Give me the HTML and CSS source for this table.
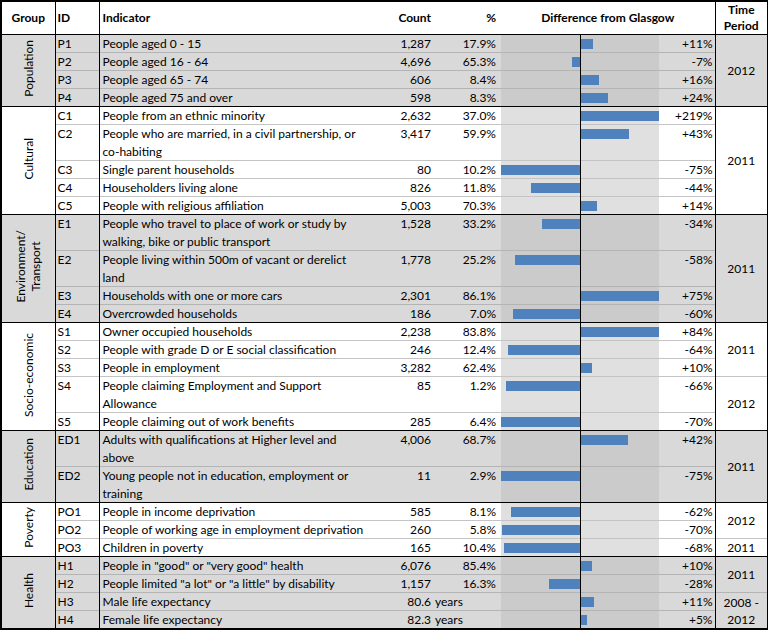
FILE: index.html
```html
<!DOCTYPE html>
<html>
<head>
<meta charset="utf-8">
<link rel="stylesheet" href="styles.css">
</head>
<body>
<table class="tbl">
<colgroup>
<col class="c-grp"><col class="c-id"><col class="c-ind"><col class="c-cnt"><col class="c-pct"><col class="c-neg"><col class="c-pos"><col class="c-dif"><col class="c-time">
</colgroup>
<thead>
<tr class="head">
<th class="grp">Group</th><th class="id">ID</th><th class="ind">Indicator</th><th class="num">Count</th><th class="num pct">%</th><th class="dfh" colspan="3">Difference from Glasgow</th><th class="time">Time<br>Period</th>
</tr>
</thead>
<tbody class="shade">
<tr class="first"><td class="grp" rowspan="4"><span class="vt">Population</span></td><td class="id">P1</td><td class="ind">People aged 0 - 15</td><td class="num">1,287</td><td class="num pct">17.9%</td><td class="neg"></td><td class="pos"><div class="bar" style="width:12px"></div></td><td class="dif">+11%</td><td class="time" rowspan="4">2012</td></tr>
<tr><td class="id">P2</td><td class="ind">People aged 16 - 64</td><td class="num">4,696</td><td class="num pct">65.3%</td><td class="neg"><div class="bar" style="width:8px"></div></td><td class="pos"></td><td class="dif">-7%</td></tr>
<tr><td class="id">P3</td><td class="ind">People aged 65 - 74</td><td class="num">606</td><td class="num pct">8.4%</td><td class="neg"></td><td class="pos"><div class="bar" style="width:18px"></div></td><td class="dif">+16%</td></tr>
<tr><td class="id">P4</td><td class="ind">People aged 75 and over</td><td class="num">598</td><td class="num pct">8.3%</td><td class="neg"></td><td class="pos"><div class="bar" style="width:27px"></div></td><td class="dif">+24%</td></tr>
</tbody>
<tbody class="plain">
<tr class="first"><td class="grp" rowspan="6"><span class="vt">Cultural</span></td><td class="id">C1</td><td class="ind">People from an ethnic minority</td><td class="num">2,632</td><td class="num pct">37.0%</td><td class="neg"></td><td class="pos"><div class="bar" style="width:79px"></div></td><td class="dif">+219%</td><td class="time" rowspan="6">2011</td></tr>
<tr class="two"><td class="id">C2</td><td class="ind">People who are married, in a civil partnership, or<br>co-habiting</td><td class="num">3,417</td><td class="num pct">59.9%</td><td class="neg"></td><td class="pos"><div class="bar" style="width:48px"></div></td><td class="dif">+43%</td></tr>
<tr><td class="id">C3</td><td class="ind">Single parent households</td><td class="num">80</td><td class="num pct">10.2%</td><td class="neg"><div class="bar" style="width:79px"></div></td><td class="pos"></td><td class="dif">-75%</td></tr>
<tr><td class="id">C4</td><td class="ind">Householders living alone</td><td class="num">826</td><td class="num pct">11.8%</td><td class="neg"><div class="bar" style="width:49px"></div></td><td class="pos"></td><td class="dif">-44%</td></tr>
<tr><td class="id">C5</td><td class="ind">People with religious affiliation</td><td class="num">5,003</td><td class="num pct">70.3%</td><td class="neg"></td><td class="pos"><div class="bar" style="width:16px"></div></td><td class="dif">+14%</td></tr>
</tbody>
<tbody class="shade">
<tr class="first two"><td class="grp" rowspan="6"><span class="vt">Environment/<br>Transport</span></td><td class="id">E1</td><td class="ind">People who travel to place of work or study by<br>walking, bike or public transport</td><td class="num">1,528</td><td class="num pct">33.2%</td><td class="neg"><div class="bar" style="width:38px"></div></td><td class="pos"></td><td class="dif">-34%</td><td class="time" rowspan="6">2011</td></tr>
<tr class="two"><td class="id">E2</td><td class="ind">People living within 500m of vacant or derelict<br>land</td><td class="num">1,778</td><td class="num pct">25.2%</td><td class="neg"><div class="bar" style="width:65px"></div></td><td class="pos"></td><td class="dif">-58%</td></tr>
<tr><td class="id">E3</td><td class="ind">Households with one or more cars</td><td class="num">2,301</td><td class="num pct">86.1%</td><td class="neg"></td><td class="pos"><div class="bar" style="width:79px"></div></td><td class="dif">+75%</td></tr>
<tr><td class="id">E4</td><td class="ind">Overcrowded households</td><td class="num">186</td><td class="num pct">7.0%</td><td class="neg"><div class="bar" style="width:67px"></div></td><td class="pos"></td><td class="dif">-60%</td></tr>
</tbody>
<tbody class="plain">
<tr class="first"><td class="grp" rowspan="6"><span class="vt">Socio-economic</span></td><td class="id">S1</td><td class="ind">Owner occupied households</td><td class="num">2,238</td><td class="num pct">83.8%</td><td class="neg"></td><td class="pos"><div class="bar" style="width:79px"></div></td><td class="dif">+84%</td><td class="time" rowspan="3">2011</td></tr>
<tr><td class="id">S2</td><td class="ind">People with grade D or E social classification</td><td class="num">246</td><td class="num pct">12.4%</td><td class="neg"><div class="bar" style="width:72px"></div></td><td class="pos"></td><td class="dif">-64%</td></tr>
<tr><td class="id">S3</td><td class="ind">People in employment</td><td class="num">3,282</td><td class="num pct">62.4%</td><td class="neg"></td><td class="pos"><div class="bar" style="width:11px"></div></td><td class="dif">+10%</td></tr>
<tr class="two"><td class="id">S4</td><td class="ind">People claiming Employment and Support<br>Allowance</td><td class="num">85</td><td class="num pct">1.2%</td><td class="neg"><div class="bar" style="width:74px"></div></td><td class="pos"></td><td class="dif">-66%</td><td class="time" rowspan="3">2012</td></tr>
<tr><td class="id">S5</td><td class="ind">People claiming out of work benefits</td><td class="num">285</td><td class="num pct">6.4%</td><td class="neg"><div class="bar" style="width:79px"></div></td><td class="pos"></td><td class="dif">-70%</td></tr>
</tbody>
<tbody class="shade">
<tr class="first two"><td class="grp" rowspan="4"><span class="vt">Education</span></td><td class="id">ED1</td><td class="ind">Adults with qualifications at Higher level and<br>above</td><td class="num">4,006</td><td class="num pct">68.7%</td><td class="neg"></td><td class="pos"><div class="bar" style="width:47px"></div></td><td class="dif">+42%</td><td class="time" rowspan="4">2011</td></tr>
<tr class="two"><td class="id">ED2</td><td class="ind">Young people not in education, employment or<br>training</td><td class="num">11</td><td class="num pct">2.9%</td><td class="neg"><div class="bar" style="width:79px"></div></td><td class="pos"></td><td class="dif">-75%</td></tr>
</tbody>
<tbody class="plain">
<tr class="first"><td class="grp" rowspan="3"><span class="vt">Poverty</span></td><td class="id">PO1</td><td class="ind">People in income deprivation</td><td class="num">585</td><td class="num pct">8.1%</td><td class="neg"><div class="bar" style="width:69px"></div></td><td class="pos"></td><td class="dif">-62%</td><td class="time" rowspan="2">2012</td></tr>
<tr><td class="id">PO2</td><td class="ind">People of working age in employment deprivation</td><td class="num">260</td><td class="num pct">5.8%</td><td class="neg"><div class="bar" style="width:78px"></div></td><td class="pos"></td><td class="dif">-70%</td></tr>
<tr><td class="id">PO3</td><td class="ind">Children in poverty</td><td class="num">165</td><td class="num pct">10.4%</td><td class="neg"><div class="bar" style="width:76px"></div></td><td class="pos"></td><td class="dif">-68%</td><td class="time">2011</td></tr>
</tbody>
<tbody class="shade">
<tr class="first"><td class="grp" rowspan="4"><span class="vt">Health</span></td><td class="id">H1</td><td class="ind">People in "good" or "very good" health</td><td class="num">6,076</td><td class="num pct">85.4%</td><td class="neg"></td><td class="pos"><div class="bar" style="width:11px"></div></td><td class="dif">+10%</td><td class="time" rowspan="2">2011</td></tr>
<tr><td class="id">H2</td><td class="ind">People limited "a lot" or "a little" by disability</td><td class="num">1,157</td><td class="num pct">16.3%</td><td class="neg"><div class="bar" style="width:31px"></div></td><td class="pos"></td><td class="dif">-28%</td></tr>
<tr><td class="id">H3</td><td class="ind">Male life expectancy</td><td class="num">80.6</td><td class="unit">years</td><td class="neg"></td><td class="pos"><div class="bar" style="width:13px"></div></td><td class="dif">+11%</td><td class="time" rowspan="2">2008 -<br>2012</td></tr>
<tr><td class="id">H4</td><td class="ind">Female life expectancy</td><td class="num">82.3</td><td class="unit">years</td><td class="neg"></td><td class="pos"><div class="bar" style="width:6px"></div></td><td class="dif">+5%</td></tr>
</tbody>
</table>
</body>
</html>
```
FILE: styles.css
```css
html, body {
  margin: 0;
  padding: 0;
  background: #ffffff;
}
body {
  font-family: Lato, "Open Sans", sans-serif;
  font-size: 12px;
  color: #000;
}
.tbl {
  border-collapse: collapse;
  table-layout: fixed;
  width: 767px;
  border: 2px solid #000;
}
.c-grp { width: 54px; }
.c-id { width: 44px; }
.c-ind { width: 274px; }
.c-cnt { width: 61px; }
.c-pct { width: 67px; }
.c-neg { width: 79px; }
.c-pos { width: 79px; }
.c-dif { width: 56px; }
.c-time { width: 53px; }

.tbl th, .tbl td {
  padding: 0 3px;
  height: 17px;
  line-height: 17px;
  white-space: nowrap;
  overflow: hidden;
  vertical-align: top;
  border-top: 1px solid #c4c4c4;
}
.tbl .shade td { border-top-color: #b4b4b4; }
.tbl tr.two td { height: 35px; line-height: 17.5px; }
.tbl tr.first td { border-top: 1px solid #000; }

.head th {
  height: 32px;
  line-height: 16px;
  vertical-align: middle;
  font-weight: bold;
  text-align: left;
  border-bottom: 1px solid #000;
}
.head th.grp { text-align: center; }
.head th.num { text-align: right; }
.head th.dfh { text-align: center; }
.head th.time { text-align: center; border-left: 1px solid #000; }

.grp {
  text-align: center;
  border-right: 1px solid #000;
}
.tbl td.grp { vertical-align: middle; padding: 0; }
.id { border-right: 1px solid #000; padding-left: 2px !important; }
.ind { padding-left: 3px; }
.num { text-align: right; }
.pct { padding-right: 5px !important; }
.unit { text-align: left; padding-left: 1px !important; }
.tbl td.neg, .tbl td.pos { padding: 0; }
.tbl td.pos { border-left: 1px solid #000; }
.dif { text-align: right; padding-right: 2px !important; border-right: 1px solid #000; }
.tbl td.time { text-align: center; vertical-align: middle; line-height: 17px; }

.vt {
  display: inline-block;
  writing-mode: vertical-rl;
  transform: rotate(180deg);
  line-height: 15px;
  white-space: nowrap;
}

.shade td { background: #d9d9d9; }
.shade td.neg, .shade td.pos { background: #cbcbcb; }
.plain td { background: #ffffff; }
.plain td.neg, .plain td.pos { background: #e0e0e0; }

.neg { text-align: right; }
.bar {
  display: inline-block;
  height: 10px;
  margin-top: 4px;
  background: #4f81bd;
  vertical-align: top;
}
.neg .bar { float: right; }
.pos .bar { float: left; }
```
